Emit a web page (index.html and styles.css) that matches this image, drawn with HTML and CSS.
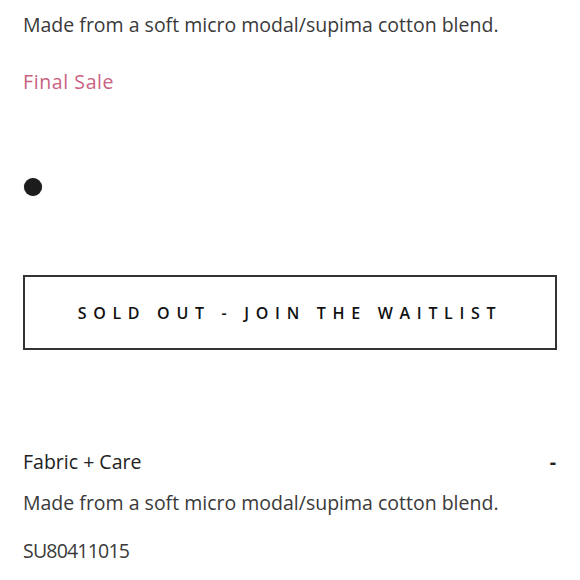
FILE: index.html
```html
<!DOCTYPE html>
<html>
<head>
<meta charset="utf-8">
<link rel="stylesheet" href="styles.css">
</head>
<body>
<div class="page">
  <p class="desc">Made from a soft micro modal/supima cotton blend.</p>
  <p class="sale">Final Sale</p>
  <div class="swatches"><span class="swatch"></span></div>
  <button class="waitlist">SOLD OUT - JOIN THE WAITLIST</button>
  <div class="accordion">
    <div class="acc-head"><span>Fabric + Care</span><span class="toggle">-</span></div>
    <p class="desc">Made from a soft micro modal/supima cotton blend.</p>
    <p class="sku">SU80411015</p>
  </div>
</div>
</body>
</html>
```
FILE: styles.css
```css
html, body { margin: 0; padding: 0; background: #fff; }
body { font-family: "Open Sans", sans-serif; color: #333; }
.page { padding: 11px 23px 0 23px; display: flex; flex-direction: column; }
p { margin: 0; }
.desc { font-size: 19.5px; line-height: 28px; color: #3a3a3a; }
.sale { font-size: 19.5px; line-height: 28px; color: #c9627f; margin-top: 29px; letter-spacing: 0.6px; }
.swatches { margin-top: 81px; height: 20px; display: flex; align-items: center; }
.swatch { width: 18px; height: 18px; border-radius: 50%; background: #1c1c1c; margin-left: 1px; box-shadow: 0 0 1px #888; }
.waitlist {
  margin-top: 78px; height: 75px; background: #fff; border: 2px solid #333;
  font-family: "Open Sans", sans-serif; font-size: 16px; font-weight: 600; letter-spacing: 6.7px; color: #111;
  padding: 0; width: 100%;
}
.accordion { margin-top: 98px; display: flex; flex-direction: column; }
.acc-head { display: flex; justify-content: space-between; font-size: 19.5px; line-height: 28px; color: #222; }
.toggle { font-weight: 700; padding-right: 1px; }
.accordion .desc { margin-top: 13px; }
.sku { font-size: 19.5px; line-height: 28px; margin-top: 20px; color: #3a3a3a; letter-spacing: -0.8px; }
```
